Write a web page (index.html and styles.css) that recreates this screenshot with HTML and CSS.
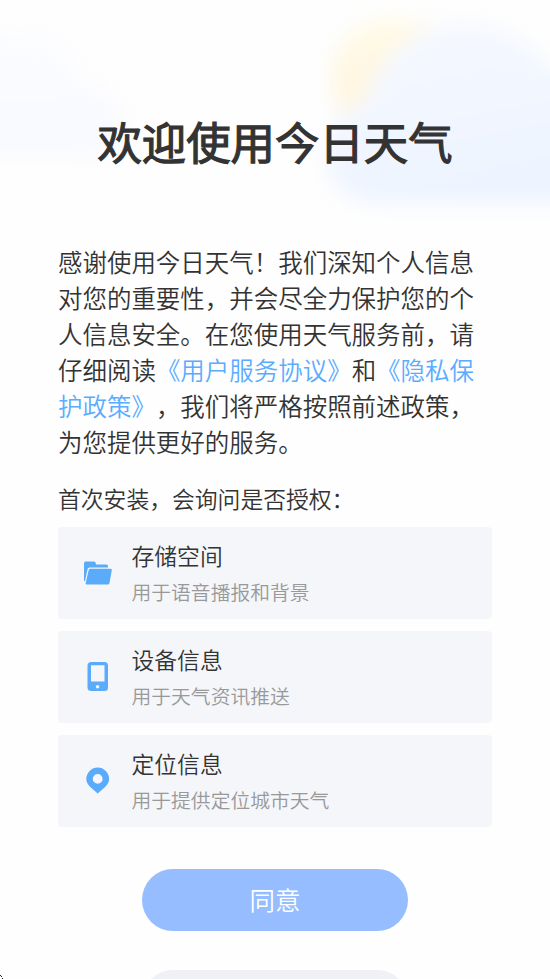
FILE: index.html
```html
<!DOCTYPE html>
<html lang="zh-CN">
<head>
<meta charset="utf-8">
<title>今日天气</title>
<link rel="stylesheet" href="styles.css">
</head>
<body>
<svg class="sky" viewBox="0 0 550 240" aria-hidden="true">
  <defs>
    <filter id="soft" x="-30%" y="-30%" width="160%" height="160%" color-interpolation-filters="sRGB"><feGaussianBlur stdDeviation="10"/></filter>
    <linearGradient id="left" x1="0" y1="0" x2="0" y2="1"><stop offset="0" stop-color="#fbfcff"/><stop offset="1" stop-color="#f8f9ff"/></linearGradient>
    <linearGradient id="right" x1="0" y1="0" x2=".3" y2="1"><stop offset="0" stop-color="#f6f8ff"/><stop offset="1" stop-color="#edf4ff"/></linearGradient>
    <linearGradient id="sun" x1="1" y1="0" x2="0" y2="1"><stop offset=".35" stop-color="#fffae6"/><stop offset="1" stop-color="#fff3df"/></linearGradient>
  </defs>
  <path filter="url(#soft)" fill="url(#left)" d="M-40 32H25C58 32 70 64 82 82C116 88 132 121 117 144C111 152 99 156 86 156H-40Z"/>
  <circle filter="url(#soft)" fill="url(#sun)" cx="391" cy="78" r="59"/>
  <path filter="url(#soft)" fill="url(#right)" d="M378 203C348 203 327 184 326 157C325 130 340 112 364 104C377 63 408 27 457 24C500 22 533 44 548 68H600V203Z"/>
</svg>
<main class="welcome">
  <h1 class="title">欢迎使用今日天气</h1>
  <p class="intro">感谢使用今日天气！我们深知个人信息<br>对您的重要性，并会尽全力保护您的个<br>人信息安全。在您使用天气服务前，请<br>仔细阅读<a class="link">《用户服务协议》</a>和<a class="link">《隐私保<br>护政策》</a>，我们将严格按照前述政策，<br>为您提供更好的服务。</p>
  <p class="ask">首次安装，会询问是否授权：</p>
  <ul class="permissions">
    <li class="card">
      <svg class="icon" viewBox="0 0 30 30"><path d="M1 23V5Q1 3.500 2.500 3.500H11Q12.500 3.500 12.700 5L13 6.500H23.500Q25 6.500 25 8V9.500H6.500Q5 9.500 4.600 11L2 23Z"/><path d="M7.500 10.700H27.500Q29.200 10.700 28.800 12.300L26.500 25Q26.200 26.500 24.700 26.500H4Q2.300 26.500 2.700 24.900L5.700 12.100Q6.100 10.700 7.500 10.700Z"/></svg>
      <div class="text"><h2 class="name">存储空间</h2><p class="desc">用于语音播报和背景</p></div>
    </li>
    <li class="card">
      <svg class="icon" viewBox="0 0 30 30"><path fill-rule="evenodd" d="M8.500 0H21.500Q25 0 25 3.500V25.500Q25 29 21.500 29H8.500Q4.500 29 4.500 25.500V3.500Q4.500 0 8.500 0ZM8 3.200V19.500H21.500V3.200ZM14.600 23A1.800 1.800 0 1 0 14.600 26.600A1.800 1.800 0 1 0 14.600 23Z"/></svg>
      <div class="text"><h2 class="name">设备信息</h2><p class="desc">用于天气资讯推送</p></div>
    </li>
    <li class="card">
      <svg class="icon" viewBox="0 0 30 30"><path fill-rule="evenodd" d="M14.700 27.500L7 20.700Q3.300 17 3.300 13A11.400 11.400 0 0 1 26.100 13Q26.100 17 22.400 20.700ZM14.700 8A4.900 4.900 0 1 0 14.700 17.800A4.900 4.900 0 1 0 14.700 8Z"/></svg>
      <div class="text"><h2 class="name">定位信息</h2><p class="desc">用于提供定位城市天气</p></div>
    </li>
  </ul>
  <div class="actions">
    <button class="button agree">同意</button>
    <button class="button other" aria-label="不同意"></button>
  </div>
</main>
<svg class="corner" viewBox="0 0 5 5" aria-hidden="true"><path d="M0 0h1v1h1v1h-1v-1h-1zM2 3h1v1h1v1h-1v-1h-1z"/></svg>
</body>
</html>
```
FILE: styles.css
```css
* { box-sizing: border-box; margin: 0; padding: 0; }
html, body { height: 979px; overflow: hidden; }
body {
  position: relative;
  background: #fefefe;
  color: #333;
  font-family: "Noto Sans CJK SC", sans-serif;
  font-weight: 350;
  text-spacing-trim: space-all;
}
.sky { position: absolute; top: 0; left: 0; width: 550px; height: 240px; }
.welcome { position: relative; height: 979px; padding: 108px 58px 0; overflow: hidden; }
.title {
  font-size: 44.4px;
  line-height: 66px;
  font-weight: 400;
  text-align: center;
  white-space: nowrap;
  -webkit-text-stroke: 1.2px #333;
}
.intro { margin-top: 70px; font-size: 24.48px; line-height: 36.1px; white-space: nowrap; }
.link { color: #5aacff; }
.ask { margin-top: 21px; font-size: 22.8px; line-height: 34px; white-space: nowrap; }
.permissions { display: flex; flex-direction: column; gap: 12px; margin-top: 11px; list-style: none; }
.card {
  display: flex;
  align-items: center;
  gap: 18.5px;
  height: 92px;
  padding-left: 25px;
  border-radius: 4px;
  background: #f4f6fa;
}
.icon { width: 30px; height: 30px; fill: #5aacfb; }
.text { padding-top: 2px; }
.name { font-size: 22.8px; line-height: 36px; font-weight: inherit; }
.desc { font-size: 19.8px; line-height: 36px; color: #999; }
.actions { display: flex; flex-direction: column; align-items: center; gap: 39px; margin-top: 42px; }
.button { flex: none; width: 266px; height: 62px; border: 0; border-radius: 31px; font: inherit; }
.agree { padding-bottom: 2px; background: #95bdff; color: #fff; font-size: 25.5px; }
.other { background: #f0f1f6; }
.corner { position: absolute; left: 0; top: 975px; width: 5px; height: 5px; fill: #222; }
```
